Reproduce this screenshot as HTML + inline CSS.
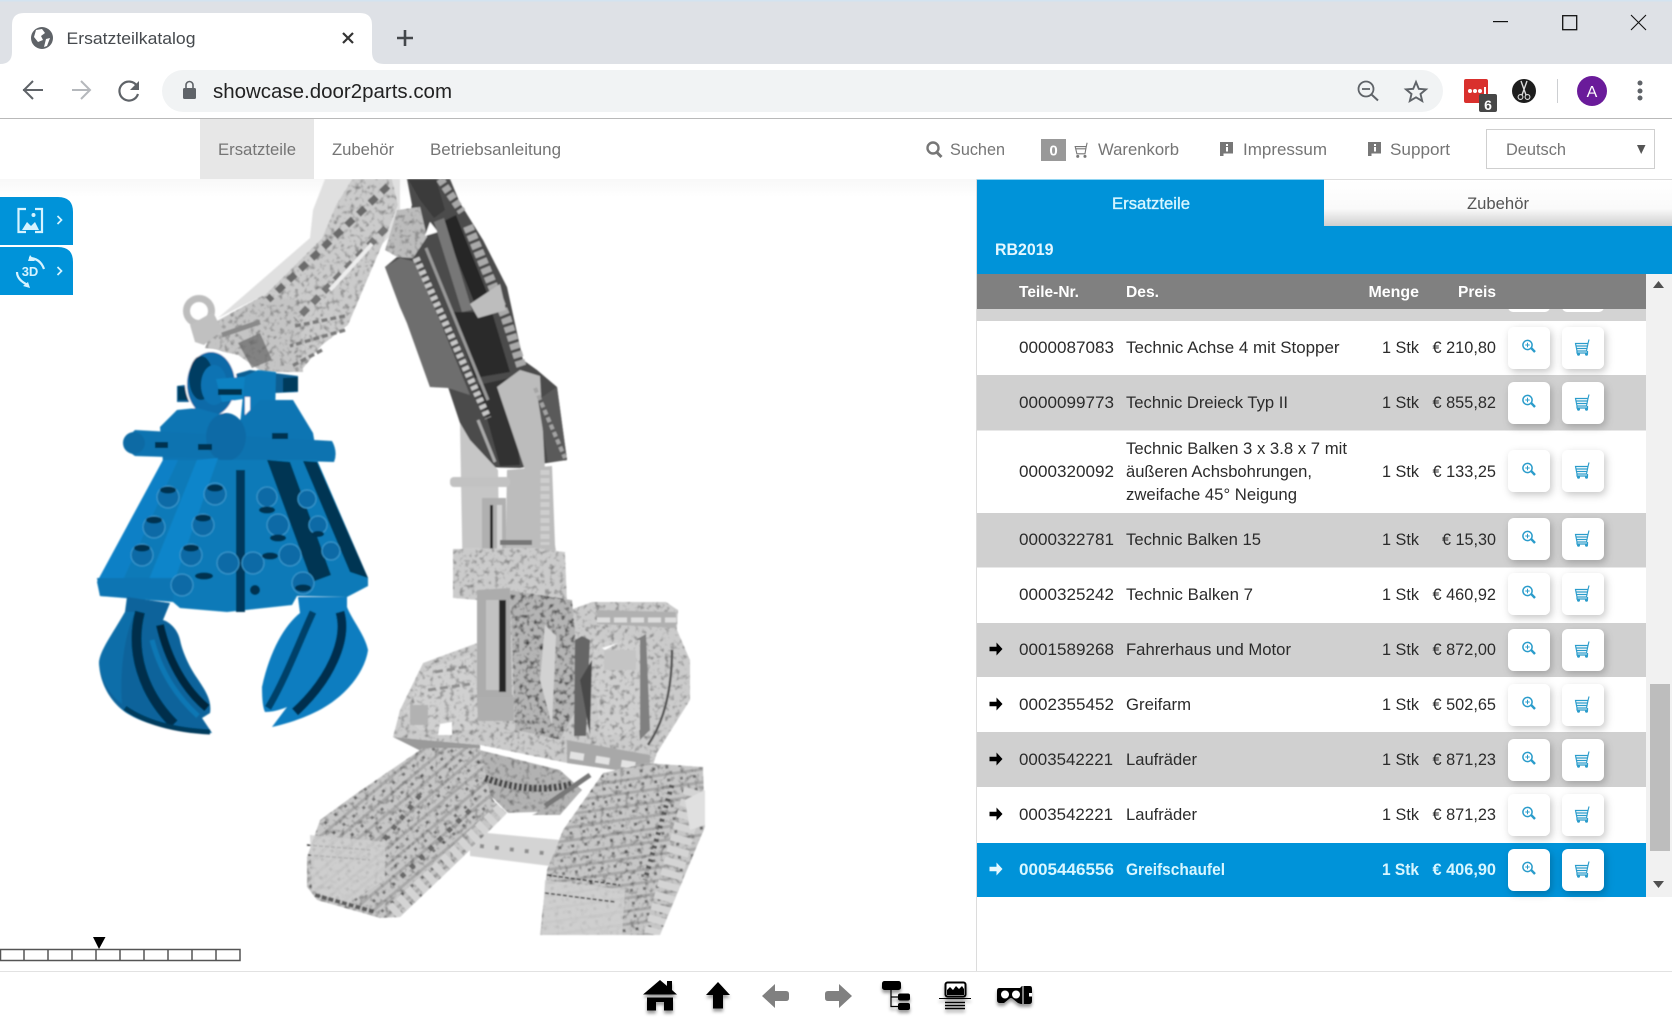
<!DOCTYPE html>
<html lang="de"><head><meta charset="utf-8"><title>Ersatzteilkatalog</title>
<style>
html,body{margin:0;padding:0;background:#fff;overflow:hidden}
svg{display:block}
text{font-family:"Liberation Sans",sans-serif;font-size:17px}
.n{fill:#757575}.t{fill:#2b2b2b}
.w{fill:#d8f6ff;font-weight:bold}
</style></head><body>
<svg xmlns="http://www.w3.org/2000/svg" width="1672" height="1018" viewBox="0 0 1672 1018">
<defs>
<filter id="sh" x="-30%" y="-30%" width="170%" height="170%"><feDropShadow dx="2" dy="3" stdDeviation="4" flood-color="#000" flood-opacity=".22"/></filter>
<filter id="is" x="-10%" y="-40%" width="120%" height="200%"><feDropShadow dx="0" dy="3" stdDeviation="1.6" flood-color="#000" flood-opacity=".4"/></filter>
<filter id="tex" x="0" y="0" width="100%" height="100%" color-interpolation-filters="sRGB">
<feTurbulence type="fractalNoise" baseFrequency=".2" numOctaves="2" seed="4" result="n"/>
<feColorMatrix in="n" type="matrix" values="1 0 0 0 .5  1 0 0 0 .5  1 0 0 0 .5  0 0 0 0 1" result="g"/>
<feBlend in="SourceGraphic" in2="g" mode="multiply" result="b"/>
<feComposite in="b" in2="SourceGraphic" operator="in"/>
</filter>
<filter id="spk" x="0" y="0" width="100%" height="100%" color-interpolation-filters="sRGB">
<feTurbulence type="fractalNoise" baseFrequency=".2" numOctaves="2" seed="9" result="n"/>
<feColorMatrix in="n" type="matrix" values="1.7 0 0 0 .12  1.7 0 0 0 .12  1.7 0 0 0 .12  0 0 0 0 1" result="g"/>
<feBlend in="SourceGraphic" in2="g" mode="multiply" result="b"/>
<feComposite in="b" in2="SourceGraphic" operator="in"/>
</filter>
<filter id="soft" x="-5%" y="-5%" width="110%" height="110%"><feGaussianBlur stdDeviation=".7"/></filter>
<pattern id="trackL" width="13" height="13" patternUnits="userSpaceOnUse" patternTransform="rotate(-40)">
<rect width="13" height="13" fill="#c6c6c6"/><rect y="0" width="13" height="3" fill="#a9a9a9"/><rect x="5" y="6" width="3" height="3" fill="#777"/>
</pattern>
<pattern id="trackR" width="13" height="13" patternUnits="userSpaceOnUse" patternTransform="rotate(-8)">
<rect width="13" height="13" fill="#c6c6c6"/><rect y="0" width="13" height="3" fill="#a8a8a8"/><rect x="6" y="6" width="3" height="3" fill="#777"/>
</pattern>
<g id="mag"><circle cx="-1.500" cy="-3" r="4.600" fill="none" stroke="#2a9ccb" stroke-width="1.500"/><path d="M2-.2 6 4" stroke="#2a9ccb" stroke-width="2.400" fill="none"/><path d="M-3.700-3h4.400M-1.500-5.200v4.400" stroke="#2a9ccb" stroke-width="1" fill="none"/></g>
<g id="cart"><path d="M-7.500-3.500H5L3.500 4H-6ZM-7-1H4.500M-6.500 1.500H4M5-3.500 6-7.500" fill="none" stroke="#2a9ccb" stroke-width="1.150"/><path d="M-6 4V6H4.500V4" fill="none" stroke="#2a9ccb" stroke-width="1.200"/><circle cx="-4.500" cy="7.200" r="1.500" fill="#2a9ccb"/><circle cx="3.500" cy="7.200" r="1.500" fill="#2a9ccb"/></g>
<g id="arr"><path d="M-6.500-2.200H.5V-6.500L6.500 0 .5 6.500V2.200H-6.500Z"/></g>
<g id="btn"><rect x="0" y="0" width="42" height="42" rx="6" fill="#fff" filter="url(#sh)"/><use href="#mag" x="21" y="21"/></g>
<g id="btc"><rect x="0" y="0" width="42" height="42" rx="6" fill="#fff" filter="url(#sh)"/><use href="#cart" x="21" y="20"/></g>
<g id="flag"><path d="M0 0H13V11.500H3.500V14H0Z" fill="#777"/><rect x="6" y="2" width="2" height="2" fill="#fff"/><rect x="6" y="5" width="2" height="4.500" fill="#fff"/></g>
<clipPath id="view"><rect x="0" y="179" width="976" height="759"/></clipPath>
<clipPath id="clipL"><polygon points="307,857 320,820 357,793 423,748 480,748 493,800 507,813 467,853 400,917 380,918 317,900 307,887"/></clipPath>
<clipPath id="clipR"><polygon points="540,935 547,870 563,830 603,773 647,763 703,767 705,827 660,935"/></clipPath>
<linearGradient id="fade" x1="0" y1="0" x2="0" y2="1"><stop offset="0" stop-color="#f8f8f8"/><stop offset="1" stop-color="#fff"/></linearGradient>
<linearGradient id="tb" x1="0" y1="0" x2="0" y2="1"><stop offset="0" stop-color="#fff"/><stop offset=".62" stop-color="#fafafa"/><stop offset="1" stop-color="#cfcfcf"/></linearGradient>
</defs>

<rect width="1672" height="1018" fill="#fff"/>
<!-- browser chrome -->
<rect width="1672" height="64" fill="#dee1e6"/>
<rect width="1672" height="1.500" fill="#d3e3f0"/>
<path d="M0 64Q12 64 12 52V25Q12 13 24 13H360Q372 13 372 25V52Q372 64 384 64Z" fill="#fff"/>
<circle cx="42" cy="38" r="11" fill="#5f6368"/>
<path d="M36 30 42 29 45 33 41 36 43 40 38 42 34 37ZM46 39 50 38 47 46 44 47Z" fill="#fff"/>
<text x="66.500" y="44" textLength="129" lengthAdjust="spacingAndGlyphs" fill="#45494d">Ersatzteilkatalog</text>
<path d="M343 33 353 43M353 33 343 43" stroke="#333" stroke-width="2.200"/>
<path d="M405 30V46M397 38H413" stroke="#44484c" stroke-width="2.600"/>

<path d="M23 90H43M33 81 24 90 33 99" fill="none" stroke="#5f6368" stroke-width="2"/>
<path d="M72 90H90M81 81 90 90 81 99" fill="none" stroke="#b5b8bc" stroke-width="2"/>
<path d="M137 86A9.500 9.500 0 1 0 138 94" fill="none" stroke="#5f6368" stroke-width="2.200"/><path d="M139 81V90H130Z" fill="#5f6368"/>
<rect x="162" y="70" width="1281" height="42" rx="21" fill="#f1f3f4"/>
<path d="M186 88V85A3.500 3.500 0 0 1 193 85V88" fill="none" stroke="#5f6368" stroke-width="1.600"/><rect x="183" y="88" width="13" height="11" rx="1.500" fill="#5f6368"/>
<text x="213" y="98" style="font-size:20px" textLength="239" lengthAdjust="spacingAndGlyphs" fill="#222">showcase.door2parts.com</text>
<circle cx="1366" cy="89" r="7.500" fill="none" stroke="#5f6368" stroke-width="1.800"/><path d="M1371.500 94.500 1378 100.500" stroke="#5f6368" stroke-width="2"/><path d="M1362 89H1370" stroke="#5f6368" stroke-width="1.800"/>
<path d="M1416 82 1418.800 88.800 1426 89.400 1420.500 94 1422.200 101 1416 97.300 1409.800 101 1411.500 94 1406 89.400 1413.200 88.800Z" fill="none" stroke="#5f6368" stroke-width="1.900"/>
<rect x="1464" y="79" width="24" height="24" rx="2" fill="#d9302d"/>
<circle cx="1470" cy="91" r="2" fill="#fff"/><circle cx="1475" cy="91" r="2" fill="#fff"/><circle cx="1480" cy="91" r="2" fill="#fff"/><rect x="1484" y="87" width="2" height="7" fill="#fff"/>
<rect x="1479" y="94" width="18" height="18" rx="2" fill="#474747"/>
<text x="1488" y="110" text-anchor="middle" style="font-size:14px;font-weight:bold" fill="#fff">6</text>
<circle cx="1524" cy="91" r="12" fill="#1d1d1d"/>
<path d="M1521 81 1526 95M1527 81 1522 95" stroke="#ddd" stroke-width="1.400"/><circle cx="1520.500" cy="97" r="2.400" fill="none" stroke="#ddd" stroke-width="1.100"/><circle cx="1527.500" cy="97" r="2.400" fill="none" stroke="#ddd" stroke-width="1.100"/>
<rect x="1557" y="79" width="1" height="24" fill="#cdcfd2"/>
<circle cx="1592" cy="91" r="15" fill="#6a1b9a"/>
<text x="1592" y="97" text-anchor="middle" fill="#fff" style="font-size:16px">A</text>
<circle cx="1640" cy="83" r="2.500" fill="#5f6368"/><circle cx="1640" cy="91" r="2.500" fill="#5f6368"/><circle cx="1640" cy="98" r="2.500" fill="#5f6368"/>
<rect x="1493" y="21" width="15" height="1.200" fill="#111"/>
<rect x="1562.700" y="15.700" width="14" height="14" fill="none" stroke="#111" stroke-width="1.300"/>
<path d="M1631 15 1646 30M1646 15 1631 30" stroke="#111" stroke-width="1.100"/>
<rect y="118" width="1672" height="1" fill="#b9b9b9"/>

<!-- nav -->
<rect x="200" y="119" width="114" height="60" fill="#e7e7e7"/>
<text class="n" x="218" y="155" textLength="78" lengthAdjust="spacingAndGlyphs">Ersatzteile</text>
<text class="n" x="332" y="155" textLength="62" lengthAdjust="spacingAndGlyphs">Zubehör</text>
<text class="n" x="430" y="155" textLength="131" lengthAdjust="spacingAndGlyphs">Betriebsanleitung</text>
<circle cx="933" cy="148" r="5.500" fill="none" stroke="#777" stroke-width="2.400"/><path d="M937 152.500 941.500 157" stroke="#777" stroke-width="3"/>
<text class="n" x="950" y="155" textLength="55" lengthAdjust="spacingAndGlyphs">Suchen</text>
<rect x="1041" y="139" width="25" height="22" fill="#999"/>
<text x="1053.500" y="155.500" text-anchor="middle" fill="#fff" style="font-size:15px;font-weight:bold">0</text>
<g transform="translate(1082,150) scale(.85)"><path d="M-8-4H5L3.500 4.500H-6ZM-7-1.400H4.500M5-4 6-8.500" fill="none" stroke="#777" stroke-width="1.300"/><circle cx="-5" cy="7.500" r="1.800" fill="#777"/><circle cx="3.500" cy="7.500" r="1.800" fill="#777"/></g>
<text class="n" x="1098" y="155" textLength="81" lengthAdjust="spacingAndGlyphs">Warenkorb</text>
<use href="#flag" x="1220" y="142"/>
<text class="n" x="1243" y="155" textLength="84" lengthAdjust="spacingAndGlyphs">Impressum</text>
<use href="#flag" x="1368" y="142"/>
<text class="n" x="1390" y="155" textLength="60" lengthAdjust="spacingAndGlyphs">Support</text>
<rect x="1486.500" y="129.500" width="168" height="39" fill="#fff" stroke="#cfcfcf"/>
<text class="n" x="1506" y="155" textLength="60" lengthAdjust="spacingAndGlyphs">Deutsch</text>
<path d="M1637 145H1645.500L1641.200 154Z" fill="#555"/>

<!-- viewer -->
<rect x="0" y="179" width="976" height="18" fill="url(#fade)"/>

<g clip-path="url(#view)">
<!-- gray machine -->
<g filter="url(#soft)">
<polygon points="325,179 400,179 400,225 340,290 300,302 258,298 218,318 310,238 313,210" fill="#e0e0e0"/>
<g filter="url(#tex)">
<polygon points="352,179 392,179 398,205 385,238 348,325 322,345 300,372 276,372 266,330 262,298 278,282 322,238 336,205" fill="#cbcbcb"/>
<polygon points="215,322 262,296 300,300 303,372 262,372 238,355 205,348" fill="#c4c4c4"/>
</g>
<path d="M388 186 268 300" stroke="#6a6a6a" stroke-width="7" stroke-dasharray="9 7" fill="none"/>
<path d="M386 228 296 320" stroke="#747474" stroke-width="7" stroke-dasharray="9 7" fill="none"/>
<path d="M372 244 330 290" stroke="#ededed" stroke-width="4" fill="none"/>
<path d="M345 316 295 326M345 330 290 346M322 350 292 366" stroke="#7a7a7a" stroke-width="3.500" stroke-dasharray="6 3" fill="none"/>
<circle cx="199" cy="311" r="12.500" fill="none" stroke="#bdbdbd" stroke-width="7"/>
<polygon points="190,325 213,312 222,330 204,345 195,342" fill="#c0c0c0"/>
<path d="M222 335 260 322" stroke="#8a8a8a" stroke-width="5" fill="none"/>
<polygon points="238,343 260,333 272,360 252,368" fill="#666" opacity=".7"/>

<!-- stick -->
<polygon points="407,179 450,179 460,203 483,240 507,287 523,360 537,370 557,387 567,460 547,463 520,468 477,467 460,423 448,387 430,387 407,323 400,307 385,267 397,257 412,205" fill="#4c4c4c"/>
<polygon points="385,267 400,258 416,262 470,395 448,388 430,387 406,320 400,307" fill="#6e6e6e"/>
<polygon points="408,179 436,179 445,210 434,218 420,200" fill="#3a3a3a"/>
<polygon points="397,210 420,207 427,237 413,258 397,257 385,250" fill="#bcbcbc" filter="url(#tex)"/>
<polygon points="430,222 438,232 425,236" fill="#fff"/>
<path d="M440 179 462 212" stroke="#a8a8a8" stroke-width="8" stroke-dasharray="6 3" fill="none"/>
<polygon points="442,222 456,215 490,300 478,312" fill="#262626"/>
<polygon points="452,312 492,312 510,372 475,378" fill="#2a2a2a"/>
<polygon points="478,385 510,378 520,465 500,466" fill="#303030"/>
<path d="M416 258 488 418" stroke="#c8c8c8" stroke-width="7" stroke-dasharray="4 3" fill="none"/>
<path d="M426 248 488 400" stroke="#999" stroke-width="3" fill="none"/>
<polygon points="434,222 444,218 472,310 462,312" fill="#777"/>
<path d="M468 226 506 318 522 368" stroke="#aaa" stroke-width="10" stroke-dasharray="6 3" fill="none"/>
<polygon points="470,304 500,284 506,310 478,318" fill="#bdbdbd"/>
<polygon points="497,387 520,370 540,376 545,470 525,470" fill="#bcbcbc"/>
<polygon points="538,400 557,387 567,460 548,462" fill="#5a5a5a"/>
<path d="M535 388 565 458" stroke="#a4a4a4" stroke-width="4" stroke-dasharray="5 3" fill="none"/>
<path d="M478 420 495 462" stroke="#aaa" stroke-width="3" fill="none"/>

<!-- column -->
<polygon points="460,423 470,440 498,470 500,590 463,590" fill="#c6c6c6"/>
<polygon points="507,470 552,466 555,545 562,590 505,590" fill="#bcbcbc"/>
<rect x="450" y="477" width="60" height="10" rx="4" fill="#c2c2c2"/>
<rect x="482" y="498" width="24" height="88" fill="#b0b0b0"/>
<rect x="490" y="505" width="3" height="80" fill="#222"/>
<rect x="497" y="505" width="5" height="70" fill="#d5d5d5"/>
<rect x="500" y="540" width="32" height="5" fill="#777"/>
<path d="M545 470V545" stroke="#cecece" stroke-width="9" stroke-dasharray="5 3"/>

<!-- body -->
<polygon points="393,737 400,710 423,663 477,643 477,600 453,598 453,549 535,548 565,552 567,600 570,610 592,602 666,602 678,610 677,630 690,660 690,700 657,753 650,775 567,763 480,745" fill="#cbcbcb" filter="url(#tex)"/>
<polygon points="510,590 572,600 582,700 560,740 515,730" fill="#b4b4b4" filter="url(#spk)"/>
<polygon points="404,712 425,670 470,655 478,700 475,730 420,730" fill="#d0d0d0" filter="url(#tex)"/>
<path d="M435 672 470 666M428 690 470 684" stroke="#8e8e8e" stroke-width="3" stroke-dasharray="8 4" fill="none"/>
<rect x="410" y="705" width="18" height="20" fill="#b2b2b2"/>
<polygon points="477,590 510,588 512,700 512,718 478,720 477,700" fill="#acacac"/>
<rect x="486" y="600" width="14" height="90" fill="#c2c2c2"/><rect x="499" y="600" width="7" height="92" fill="#252525"/>
<rect x="478" y="697" width="36" height="24" fill="#aeaeae"/>
<polygon points="575,640 582,636 590,640 586,736 574,736" fill="#666"/>
<polygon points="580,680 592,660 590,735" fill="#4a4a4a"/>
<polygon points="632,642 646,634 650,730 640,740" fill="#808080"/>
<polygon points="594,640 640,640 640,730 600,736" fill="#cfcfcf" filter="url(#tex)"/>
<polygon points="604,650 636,650 636,670 604,670" fill="#c4c4c4"/>
<path d="M672 650Q672 710 648 745" stroke="#555" stroke-width="2.500" fill="none"/>
<polygon points="605,650 618,643 602,648" fill="#fff"/>
<polygon points="597,610 676,612 676,628 597,624" fill="#b0b0b0"/>
<path d="M597 620 676 620" stroke="#ddd" stroke-width="5" stroke-dasharray="13 4"/>
<polygon points="440,724 452,722 452,735 438,735" fill="#fff"/>
<polygon points="545,625 556,636 552,725 540,680" fill="#d2d2d2"/>
<polygon points="567,740 650,755 650,775 567,763" fill="#a8a8a8"/>
<path d="M570 755 650 768" stroke="#e3e3e3" stroke-width="7" stroke-dasharray="14 12"/>
<polygon points="393,737 480,745 480,752 423,752" fill="#9a9a9a"/>

<!-- tracks -->
<polygon points="470,850 487,833 560,840 550,866 470,856" fill="#d4d4d4"/>
<path d="M480 846 552 854" stroke="#8c8c8c" stroke-width="4" stroke-dasharray="4 11" fill="none"/>
<polygon points="307,857 320,820 357,793 423,748 480,748 493,800 507,813 467,853 400,917 380,918 317,900 307,887" fill="url(#trackL)" filter="url(#tex)"/>
<polygon points="540,935 547,870 563,830 603,773 647,763 703,767 705,827 660,935" fill="url(#trackR)" filter="url(#tex)"/>
<g clip-path="url(#clipL)"><path d="M505 812 392 918" stroke="#d4d4d4" stroke-width="22" stroke-dasharray="7 5" fill="none"/></g>
<g clip-path="url(#clipR)"><path d="M695 790 655 935" stroke="#d4d4d4" stroke-width="22" stroke-dasharray="7 5" fill="none"/></g>
<polygon points="480,750 560,770 582,790 560,815 510,815 490,795" fill="#b2b2b2" filter="url(#tex)"/>
<path d="M485 778Q530 795 573 784" stroke="#444" stroke-width="7" stroke-dasharray="3 2" fill="none"/>
<path d="M545 806 590 775" stroke="#777" stroke-width="5" fill="none"/>
<polygon points="507,813 512,825 538,812" fill="#fff"/>
<path d="M420 795 380 845 M470 810 398 880" stroke="#686868" stroke-width="5" stroke-dasharray="5 8" fill="none"/>
<path d="M307 845 370 850M308 855 370 860" stroke="#333" stroke-width="1.500" stroke-dasharray="4 2" fill="none"/>
<polygon points="310,835 385,842 385,880 345,905 312,890" fill="#cfcfcf" opacity=".8"/>
<path d="M315 895 375 912" stroke="#5c5c5c" stroke-width="4" stroke-dasharray="5 2" fill="none"/>
<polygon points="545,880 625,890 622,935 542,935" fill="#d0d0d0" opacity=".85"/>
<path d="M547 875 620 885M545 893 615 902" stroke="#333" stroke-width="1.500" stroke-dasharray="4 2" fill="none"/>
<path d="M672 785 645 880" stroke="#555" stroke-width="5" stroke-dasharray="3 4" fill="none"/>
<polygon points="685,800 705,790 705,825 690,830" fill="#e0e0e0"/>
</g>

<!-- blue grabber -->
<g filter="url(#soft)">
<polygon points="177,386 208,382 250,370 298,376 298,392 250,394 206,402 177,402" fill="#0a5f93"/>
<path d="M178 386 190 388V400H178ZM283 378 298 377V391L283 392Z" fill="#053a5c"/>
<ellipse cx="211" cy="383" rx="26" ry="34" fill="#fff"/>
<ellipse cx="211" cy="384" rx="24" ry="32" fill="#0a6ba8"/>
<ellipse cx="201" cy="378" rx="12" ry="22" fill="#053e62"/>
<ellipse cx="214" cy="385" rx="13" ry="20" fill="#0a73b3"/>
<polygon points="216,379 252,376 250,398 222,402" fill="#0a82c2"/>
<path d="M218 392H242" stroke="#04304d" stroke-width="6"/>
<path d="M245 376 258 370 276 372 275 420 240 425Z" fill="#0a79b8"/>
<rect x="245" y="397" width="5" height="20" fill="#fff"/>
<polygon points="160,427 177,410 197,408 240,420 260,400 293,400 313,433 318,462 163,462" fill="#0b74b3"/>
<path d="M135 430 332 441Q338 452 334 462L135 456Q118 445 135 430Z" fill="#0a73b0"/>
<circle cx="134" cy="443" r="11" fill="#0a6aa4"/>
<ellipse cx="226" cy="437" rx="20" ry="24" fill="#0a6aa6"/>
<path d="M155 445H168M198 447H212M272 436H288" stroke="#03304f" stroke-width="6"/>
<!-- plate -->
<polygon points="163,460 317,460 368,578 368,586 347,597 297,596 292,605 227,612 180,608 173,602 100,596 97,582" fill="#0b7ab8"/>
<polygon points="267,460 290,462 331,575 312,582" fill="#013453"/>
<polygon points="303,461 317,462 368,578 350,572" fill="#013453"/>
<polygon points="163,460 178,460 122,582 97,582" fill="#0b80c6"/>
<polygon points="197,460 218,458 174,582 148,582" fill="#0b85ca"/>
<polygon points="97,578 175,578 173,600 100,596" fill="#0a74b3"/>
<rect x="236" y="470" width="9" height="142" fill="#02385c"/>
<g fill="#0a6ba6" stroke="#3c9bd0" stroke-width="1"><circle cx="168" cy="497" r="11"/><circle cx="154" cy="527" r="11"/><circle cx="142" cy="555" r="11"/><circle cx="215" cy="494" r="11"/><circle cx="203" cy="525" r="11"/><circle cx="191" cy="555" r="11"/><circle cx="182" cy="585" r="11"/><circle cx="267" cy="497" r="10"/><circle cx="278" cy="525" r="11"/><circle cx="290" cy="555" r="11"/><circle cx="303" cy="583" r="11"/><circle cx="307" cy="499" r="9"/><circle cx="318" cy="525" r="9"/><circle cx="331" cy="551" r="9"/><circle cx="228" cy="563" r="11"/><circle cx="253" cy="563" r="11"/></g>
<g fill="#02304f"><ellipse cx="168" cy="490" rx="8" ry="3.500"/><ellipse cx="154" cy="520" rx="8" ry="3.500"/><ellipse cx="142" cy="548" rx="8" ry="3.500"/><ellipse cx="215" cy="488" rx="8" ry="3.500"/><ellipse cx="203" cy="518" rx="8" ry="3.500"/><ellipse cx="191" cy="548" rx="8" ry="3.500"/><ellipse cx="204" cy="576" rx="9" ry="3.500"/><ellipse cx="267" cy="510" rx="8" ry="3.500"/><ellipse cx="278" cy="538" rx="8" ry="3.500"/><ellipse cx="270" cy="556" rx="8" ry="3.500"/><ellipse cx="303" cy="588" rx="8" ry="3.500"/><ellipse cx="318" cy="534" rx="6" ry="3"/><ellipse cx="255" cy="590" rx="5" ry="5"/></g>
<!-- claws -->
<path d="M125 612C112 635 100 650 99 663C100 685 112 705 130 715C150 727 185 732 212 733L202 718 210 713C212 700 205 690 197 678C188 665 182 650 180 640C178 630 170 622 163 620L170 603 127 597Z" fill="#07639b"/>
<path d="M125 612C112 635 100 650 99 663C101 680 110 695 122 704C120 680 122 640 135 612Z" fill="#0a6ea9"/>
<path d="M140 612C130 650 142 692 174 724" fill="none" stroke="#022f4c" stroke-width="10"/>
<path d="M160 625C168 660 185 690 207 708" fill="none" stroke="#02263d" stroke-width="8"/>
<path d="M152 640C160 670 175 695 198 716" fill="none" stroke="#0a77b4" stroke-width="5"/>
<path d="M125 708C145 722 172 730 210 732" fill="none" stroke="#023a5c" stroke-width="5"/>
<path d="M300 613C285 625 270 650 262 687C262 700 263 708 265 712C272 712 280 710 287 707L272 727C295 722 320 712 335 700C355 685 366 665 368 650C365 635 352 620 347 607L347 597 298 597Z" fill="#0a7dc0"/>
<path d="M313 612C300 640 285 680 268 708" fill="none" stroke="#014068" stroke-width="7"/>
<path d="M340 612C348 640 330 680 295 712" fill="none" stroke="#012f4d" stroke-width="9"/>
</g>
</g>

<!-- left tool buttons -->
<path d="M0 197H58Q73 197 73 212V245H0Z" fill="#0093d9"/>
<path d="M0 247H58Q73 247 73 262V295H0Z" fill="#0093d9"/>
<path d="M26 209H18.500V232H26M35 209H42V232H35" fill="none" stroke="#d6f3ff" stroke-width="2.200"/>
<circle cx="33.500" cy="215" r="2" fill="#d6f3ff"/><path d="M22 230 27 222 31 226 35 222 39 230Z" fill="#d6f3ff"/>
<path d="M57.500 216 61.500 220 57.500 224M57.500 267 61.500 271 57.500 275" fill="none" stroke="#d6f3ff" stroke-width="1.700"/>
<text x="30" y="276" text-anchor="middle" fill="#d6f3ff" style="font-size:13px;font-weight:bold">3D</text>
<path d="M29 258Q40 258 44 269M17 272Q17 280 28 285" fill="none" stroke="#d6f3ff" stroke-width="2.200"/>
<path d="M30 255 35 261 28 261ZM28 282 23 286 30 288Z" fill="#d6f3ff"/>

<!-- slider -->
<path d="M.5 949.500H240V960.500H.5ZM24 949.500V960.500M48 949.500V960.500M72 949.500V960.500M96 949.500V960.500M120 949.500V960.500M144 949.500V960.500M168 949.500V960.500M192 949.500V960.500M216 949.500V960.500" fill="#fff" stroke="#555" stroke-width="1.500"/>
<path d="M93 937H105.500L99 949Z" fill="#000"/>

<!-- right panel -->
<rect x="976" y="179" width="1" height="793" fill="#dcdcdc"/>
<rect x="977" y="180" width="695" height="94" fill="#0093d9"/>
<rect x="977" y="179" width="348" height="1" fill="#8fd4f2"/>
<rect x="1324" y="179" width="348" height="47" fill="#f7f7f7"/>
<rect x="1324" y="179" width="348" height="1" fill="#ddd"/>
<rect x="1324" y="180" width="348" height="46" fill="url(#tb)"/>
<text x="1112" y="209" textLength="78" lengthAdjust="spacingAndGlyphs" class="w" style="font-weight:normal;stroke:#d8f6ff;stroke-width:.35">Ersatzteile</text>
<text x="1467" y="209" textLength="62" lengthAdjust="spacingAndGlyphs" fill="#555">Zubehör</text>
<text x="995" y="255" textLength="58.500" lengthAdjust="spacingAndGlyphs" fill="#e4f7ff" style="font-weight:bold">RB2019</text>

<rect x="1646" y="274" width="26" height="623" fill="#f1f1f1"/>
<rect x="1650" y="684" width="20" height="167" fill="#bdbdbd"/>
<path d="M1653 288H1664L1658.500 281Z" fill="#505050"/>
<path d="M1653 881H1664L1658.500 888Z" fill="#505050"/>

<!-- rows -->
<rect x="977" y="309" width="669" height="12" fill="#d3d3d3"/>
<rect x="1508" y="300" width="42" height="12" rx="5" fill="#fff"/><rect x="1562" y="300" width="42" height="12" rx="5" fill="#fff"/>
<rect x="977" y="375" width="669" height="55.500" fill="#d0d0d0"/>
<rect x="977" y="513" width="669" height="54.500" fill="#d0d0d0"/>
<rect x="977" y="623" width="669" height="54" fill="#d0d0d0"/>
<rect x="977" y="732" width="669" height="55" fill="#d0d0d0"/>
<rect x="977" y="843" width="669" height="54" fill="#0093d9"/>
<rect x="977" y="274" width="669" height="35" fill="#808080"/>
<g fill="#fff">
<text x="1019" y="297" textLength="60" lengthAdjust="spacingAndGlyphs" style="font-size:16px;font-weight:bold">Teile-Nr.</text>
<text x="1126" y="297" textLength="33" lengthAdjust="spacingAndGlyphs" style="font-size:16px;font-weight:bold">Des.</text>
<text x="1368.500" y="297" textLength="50.500" lengthAdjust="spacingAndGlyphs" style="font-size:16px;font-weight:bold">Menge</text>
<text x="1458" y="297" textLength="38" lengthAdjust="spacingAndGlyphs" style="font-size:16px;font-weight:bold">Preis</text>
</g>

<text class="t" x="1019" y="353" textLength="95" lengthAdjust="spacingAndGlyphs">0000087083</text>
<text class="t" x="1126" y="353" textLength="213.500" lengthAdjust="spacingAndGlyphs">Technic Achse 4 mit Stopper</text>
<text class="t" x="1382" y="353" textLength="37" lengthAdjust="spacingAndGlyphs">1 Stk</text>
<text class="t" x="1432.500" y="353" textLength="63.500" lengthAdjust="spacingAndGlyphs">€ 210,80</text>

<text class="t" x="1019" y="408" textLength="95" lengthAdjust="spacingAndGlyphs">0000099773</text>
<text class="t" x="1126" y="408" textLength="162" lengthAdjust="spacingAndGlyphs">Technic Dreieck Typ II</text>
<text class="t" x="1382" y="408" textLength="37" lengthAdjust="spacingAndGlyphs">1 Stk</text>
<text class="t" x="1432.500" y="408" textLength="63.500" lengthAdjust="spacingAndGlyphs">€ 855,82</text>

<text class="t" x="1019" y="477" textLength="95" lengthAdjust="spacingAndGlyphs">0000320092</text>
<text class="t" x="1126" y="454" textLength="221" lengthAdjust="spacingAndGlyphs">Technic Balken 3 x 3.8 x 7 mit</text>
<text class="t" x="1126" y="477" textLength="186" lengthAdjust="spacingAndGlyphs">äußeren Achsbohrungen,</text>
<text class="t" x="1126" y="500" textLength="171" lengthAdjust="spacingAndGlyphs">zweifache 45° Neigung</text>
<text class="t" x="1382" y="477" textLength="37" lengthAdjust="spacingAndGlyphs">1 Stk</text>
<text class="t" x="1432.500" y="477" textLength="63.500" lengthAdjust="spacingAndGlyphs">€ 133,25</text>

<text class="t" x="1019" y="545" textLength="95" lengthAdjust="spacingAndGlyphs">0000322781</text>
<text class="t" x="1126" y="545" textLength="135" lengthAdjust="spacingAndGlyphs">Technic Balken 15</text>
<text class="t" x="1382" y="545" textLength="37" lengthAdjust="spacingAndGlyphs">1 Stk</text>
<text class="t" x="1442" y="545" textLength="54" lengthAdjust="spacingAndGlyphs">€ 15,30</text>

<text class="t" x="1019" y="600" textLength="95" lengthAdjust="spacingAndGlyphs">0000325242</text>
<text class="t" x="1126" y="600" textLength="127" lengthAdjust="spacingAndGlyphs">Technic Balken 7</text>
<text class="t" x="1382" y="600" textLength="37" lengthAdjust="spacingAndGlyphs">1 Stk</text>
<text class="t" x="1432.500" y="600" textLength="63.500" lengthAdjust="spacingAndGlyphs">€ 460,92</text>

<text class="t" x="1019" y="655" textLength="95" lengthAdjust="spacingAndGlyphs">0001589268</text>
<text class="t" x="1126" y="655" textLength="165" lengthAdjust="spacingAndGlyphs">Fahrerhaus und Motor</text>
<text class="t" x="1382" y="655" textLength="37" lengthAdjust="spacingAndGlyphs">1 Stk</text>
<text class="t" x="1432.500" y="655" textLength="63.500" lengthAdjust="spacingAndGlyphs">€ 872,00</text>

<text class="t" x="1019" y="710" textLength="95" lengthAdjust="spacingAndGlyphs">0002355452</text>
<text class="t" x="1126" y="710" textLength="65" lengthAdjust="spacingAndGlyphs">Greifarm</text>
<text class="t" x="1382" y="710" textLength="37" lengthAdjust="spacingAndGlyphs">1 Stk</text>
<text class="t" x="1432.500" y="710" textLength="63.500" lengthAdjust="spacingAndGlyphs">€ 502,65</text>

<text class="t" x="1019" y="765" textLength="94" lengthAdjust="spacingAndGlyphs">0003542221</text>
<text class="t" x="1126" y="765" textLength="71" lengthAdjust="spacingAndGlyphs">Laufräder</text>
<text class="t" x="1382" y="765" textLength="37" lengthAdjust="spacingAndGlyphs">1 Stk</text>
<text class="t" x="1432.500" y="765" textLength="63.500" lengthAdjust="spacingAndGlyphs">€ 871,23</text>

<text class="t" x="1019" y="820" textLength="94" lengthAdjust="spacingAndGlyphs">0003542221</text>
<text class="t" x="1126" y="820" textLength="71" lengthAdjust="spacingAndGlyphs">Laufräder</text>
<text class="t" x="1382" y="820" textLength="37" lengthAdjust="spacingAndGlyphs">1 Stk</text>
<text class="t" x="1432.500" y="820" textLength="63.500" lengthAdjust="spacingAndGlyphs">€ 871,23</text>

<text class="w" x="1019" y="875" textLength="95" lengthAdjust="spacingAndGlyphs">0005446556</text>
<text class="w" x="1126" y="875" textLength="99" lengthAdjust="spacingAndGlyphs">Greifschaufel</text>
<text class="w" x="1382" y="875" textLength="37" lengthAdjust="spacingAndGlyphs">1 Stk</text>
<text class="w" x="1432.500" y="875" textLength="63.500" lengthAdjust="spacingAndGlyphs">€ 406,90</text>

<use href="#arr" x="996" y="649"/><use href="#arr" x="996" y="704"/><use href="#arr" x="996" y="759"/><use href="#arr" x="996" y="814"/>
<use href="#arr" x="996" y="869" fill="#e6f8ff"/>

<use href="#btn" x="1508" y="327"/><use href="#btc" x="1562" y="327"/>
<use href="#btn" x="1508" y="382"/><use href="#btc" x="1562" y="382"/>
<use href="#btn" x="1508" y="450"/><use href="#btc" x="1562" y="450"/>
<use href="#btn" x="1508" y="518"/><use href="#btc" x="1562" y="518"/>
<use href="#btn" x="1508" y="573"/><use href="#btc" x="1562" y="573"/>
<use href="#btn" x="1508" y="629"/><use href="#btc" x="1562" y="629"/>
<use href="#btn" x="1508" y="684"/><use href="#btc" x="1562" y="684"/>
<use href="#btn" x="1508" y="739"/><use href="#btc" x="1562" y="739"/>
<use href="#btn" x="1508" y="794"/><use href="#btc" x="1562" y="794"/>
<use href="#btn" x="1508" y="849"/><use href="#btc" x="1562" y="849"/>

<!-- bottom bar -->
<rect y="971" width="1672" height="1" fill="#e2e2e2"/>
<g filter="url(#is)">
<path d="M643 994.500 660 980 667 986V981H672V990L677 994.500Z"/>
<path d="M647 997.500H673V1010.500H664V1002H656V1010.500H647Z"/>
<path d="M718 982 730 995H723V1008.500H713V995H706Z"/>
</g>
<path d="M762 996 775 984V991H786Q789 991 789 994V998Q789 1001 786 1001H775V1008Z" fill="#808080"/>
<path d="M852 996 839 984V991H828Q825 991 825 994V998Q825 1001 828 1001H839V1008Z" fill="#808080"/>
<g filter="url(#is)">
<rect x="882" y="981" width="19" height="9" rx="2.500"/>
<path d="M891 990V1006.500H898M891 997H898" fill="none" stroke="#000" stroke-width="1.200"/>
<rect x="898" y="993.500" width="12" height="7" rx="2"/>
<rect x="898" y="1003" width="12" height="7" rx="2"/>
<rect x="945.500" y="982.500" width="20" height="14" rx="2" fill="#fff" stroke="#000" stroke-width="2"/>
<path d="M947 995V990L950 987 953 990 956 986 959 989 962 986 964 989V995Z"/>
<path d="M939 998.500H971" stroke="#000" stroke-width="1"/>
<path d="M945 1002.500H965M945 1005.500H965M945 1008.500H965" stroke="#000" stroke-width="1.400"/>
<path d="M999 988H1020L1022 986H1030Q1032 986 1032 989V1001Q1032 1004 1029 1004H1021L1018 1003 1013 999Q1011 997 1009 999L1004 1003H1000Q997 1003 997 1000V991Q997 988 999 988Z"/>
</g>
<circle cx="1005" cy="994.500" r="4" fill="#fff"/><circle cx="1016" cy="994.500" r="4" fill="#fff"/><rect x="1029" y="993" width="3" height="3.500" fill="#fff"/><rect x="1022.500" y="986" width="1" height="18" fill="#fff"/>
</svg>
</body></html>
